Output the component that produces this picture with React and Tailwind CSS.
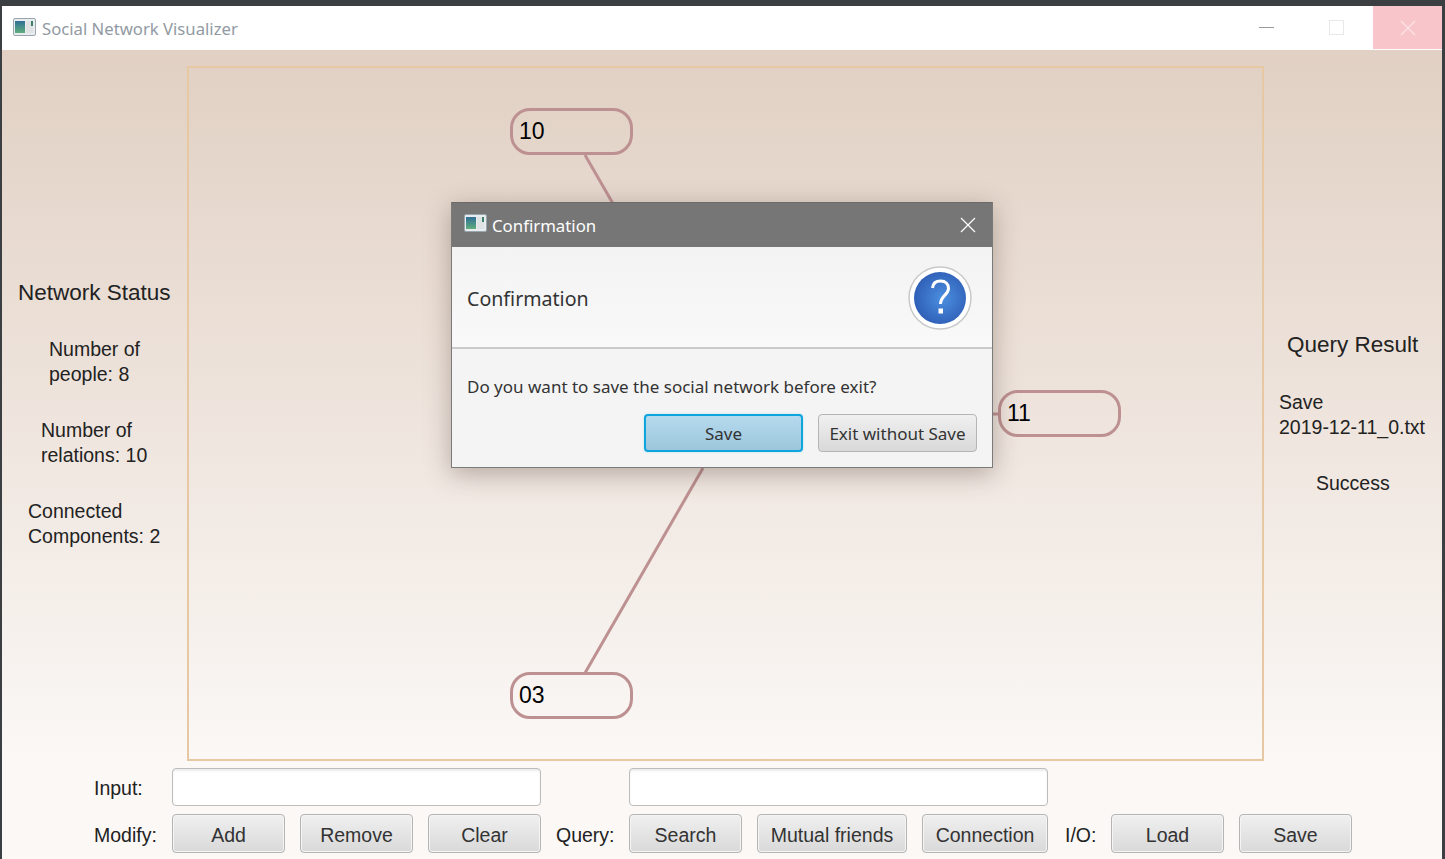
import React from "react";

const sans = "font-['Liberation_Sans',Arial,sans-serif]";
const ui = "font-['Noto_Sans','Open_Sans',sans-serif]";

const buttonClass =
  "h-[39px] pt-[4px] rounded-[4px] border border-[#b5b5b5] bg-gradient-to-b from-[#f0f0f0] to-[#d9d9d9] text-[19.5px] text-[#333] shadow-[inset_0_0_0_1px_#f4f4f4] flex items-center justify-center shrink-0";

function AppIcon({ className }) {
  return (
    <svg className={className} viewBox="0 0 23 18" width="23" height="18">
      <defs>
        <linearGradient id="appIconFill" x1="0" y1="0" x2="0" y2="1">
          <stop offset="0" stopColor="#2f6f96" />
          <stop offset="1" stopColor="#5fae7c" />
        </linearGradient>
      </defs>
      <rect x="0.5" y="0.5" width="22" height="17" rx="1.5" fill="#e8ecee" stroke="#9aa6ad" />
      <rect x="2" y="3" width="10" height="12" fill="url(#appIconFill)" />
      <rect x="13" y="3" width="7" height="12" fill="#dfe3e3" />
      <rect x="18" y="3" width="2" height="5" fill="#3f7f6c" />
    </svg>
  );
}

function Node({ label, className }) {
  return (
    <div
      className={`absolute w-[123px] h-[47px] rounded-[20px] border-[3px] border-[#bd9191] flex items-center pl-[6px] text-[23px] text-black ${className}`}
    >
      {label}
    </div>
  );
}

function Stat({ lines, className }) {
  return (
    <div className={`text-[19.5px] leading-[25px] text-[#222] ${className}`}>
      {lines.map((l) => (
        <div key={l}>{l}</div>
      ))}
    </div>
  );
}

function Graph() {
  return (
    <div className="relative w-[1077px] h-[695px] border-2 border-[#e8c8a2] shrink-0">
      {/* edges, coordinates relative to the canvas */}
      <svg className="absolute inset-0" width="1073" height="691">
        <line x1="396" y1="87" x2="514" y2="292" stroke="#bd9191" strokeWidth="3" />
        <line x1="396" y1="605" x2="514" y2="400" stroke="#bd9191" strokeWidth="3" />
        <line x1="779" y1="346" x2="811" y2="346" stroke="#bd9191" strokeWidth="3" />
      </svg>
      <Node label="10" className="left-[321px] top-[40px]" />
      <Node label="11" className="left-[809px] top-[322px]" />
      <Node label="03" className="left-[321px] top-[604px]" />
    </div>
  );
}

function Dialog() {
  return (
    <div className={`absolute left-[451px] top-[202px] w-[542px] h-[266px] border border-[#7a7a7a] border-t-[#6a6a6a] bg-[#f4f4f4] shadow-[0_6px_24px_rgba(70,50,40,0.35)] flex flex-col ${ui}`}>
      <div className="h-[44px] bg-[#767676] flex items-center pl-[12px] pr-[16px] text-white text-[16.8px] shrink-0">
        <AppIcon className="mr-[5px] -mt-[4px]" />
        <span className="pt-[2px]">Confirmation</span>
        <svg className="ml-auto" width="16" height="16" viewBox="0 0 16 16">
          <path d="M1 1 L15 15 M15 1 L1 15" stroke="#fff" strokeWidth="1.2" fill="none" />
        </svg>
      </div>
      <div className="h-[102px] pt-[2px] bg-gradient-to-b from-[#f3f3f3] to-[#f9f9f9] border-b-2 border-[#cbcbcb] flex items-center pl-[15px] pr-[20px] shrink-0">
        <span className="pt-[2px] text-[19.6px] text-[#333]">Confirmation</span>
        <svg className="ml-auto" width="64" height="64" viewBox="0 0 64 64">
          <defs>
            <radialGradient id="helpFill" cx="0.55" cy="0.5" r="0.55">
              <stop offset="0" stopColor="#4b8fe0" />
              <stop offset="1" stopColor="#2f5fb6" />
            </radialGradient>
          </defs>
          <circle cx="32" cy="32" r="31" fill="#fff" stroke="#c9c9c9" strokeWidth="1.5" />
          <circle cx="32" cy="32" r="26" fill="url(#helpFill)" />
          <path d="M24.5 22 C25 16.5 29 15 32.5 15 C37.5 15 40.5 18 40.5 22.5 C40.5 29 32.5 29.5 32.5 38" stroke="#fff" strokeWidth="3" fill="none" />
          <rect x="30.5" y="42.5" width="4.5" height="5" fill="#fff" />
        </svg>
      </div>
      <div className="pl-[15px] pt-[26px] text-[17px] leading-[24px] text-[#333]">
        Do you want to save the social network before exit?
      </div>
      <div className="flex justify-end gap-[15px] pr-[15px] mt-[15px]">
        <div className="w-[159px] h-[38px] pt-[2px] rounded-[4px] border-2 border-[#0ea5dc] bg-gradient-to-b from-[#b6daee] to-[#9cc6dc] text-[17px] text-[#333] flex items-center justify-center shadow-[0_0_2px_#a9dcf2]">
          Save
        </div>
        <div className="w-[159px] h-[38px] pt-[2px] rounded-[4px] border border-[#b5b5b5] bg-gradient-to-b from-[#f0f0f0] to-[#d9d9d9] text-[17px] text-[#333] flex items-center justify-center">
          Exit without Save
        </div>
      </div>
    </div>
  );
}

export default function App() {
  return (
    <div className={`relative h-[859px] w-[1445px] overflow-hidden bg-[#3c3f42] pt-[6px] pl-[2px] pr-[3px] ${sans}`}>
      <div className="flex flex-col h-full">
        {/* title bar */}
        <div className="h-[44px] bg-white flex items-center pl-[11px] shrink-0">
          <AppIcon className="mr-[6px] -mt-[3px]" />
          <span className={`pt-[2px] text-[16.7px] text-[#929aa3] ${ui}`}>Social Network Visualizer</span>
          <div className="ml-auto flex items-start h-full">
            <svg className="mr-[55px] mt-[21px]" width="15" height="2" viewBox="0 0 15 2">
              <rect width="15" height="1" fill="#999" />
            </svg>
            <div className="w-[15px] h-[15px] mt-[14px] mr-[29px] border border-[#e8e8e8]" />
            <div className="w-[69px] h-[43px] bg-[#f8c6ca] flex items-center justify-center">
              <svg width="16" height="16" viewBox="0 0 16 16">
                <path d="M1 1 L15 15 M15 1 L1 15" stroke="#fbe3e5" strokeWidth="1.2" fill="none" />
              </svg>
            </div>
          </div>
        </div>

        {/* main area */}
        <div className="flex-1 bg-gradient-to-b from-[#e1d0c3] to-[#fbf8f6] to-[88%] flex flex-col">
          <div className="flex pt-[16px]">
            <aside className="w-[185px] shrink-0 pt-[213px]">
              <div className="ml-[16px] text-[22.5px] leading-[27px] text-[#222]">Network Status</div>
              <Stat lines={["Number of", "people: 8"]} className="ml-[47px] mt-[31px]" />
              <Stat lines={["Number of", "relations: 10"]} className="ml-[39px] mt-[31px]" />
              <Stat lines={["Connected", "Components: 2"]} className="ml-[26px] mt-[31px]" />
            </aside>
            <Graph />
            <aside className="flex-1 pt-[265px] text-[#222]">
              <div className="ml-[23px] text-[22.5px] leading-[27px]">Query Result</div>
              <Stat lines={["Save", "2019-12-11_0.txt"]} className="ml-[15px] mt-[32px]" />
              <Stat lines={["Success"]} className="ml-[52px] mt-[31px]" />
            </aside>
          </div>

          {/* controls */}
          <div className="pl-[92px] pt-[7px] text-[19.5px] text-[#222]">
            <div className="flex items-center h-[38px]">
              <span className="w-[78px] pt-[4px]">Input:</span>
              <div className="w-[369px] h-[38px] rounded-[4px] border border-[#bdbdbd] bg-white shadow-[inset_0_2px_2px_#ececec]" />
              <div className="w-[88px]" />
              <div className="w-[419px] h-[38px] rounded-[4px] border border-[#bdbdbd] bg-white shadow-[inset_0_2px_2px_#ececec]" />
            </div>
            <div className="flex items-center mt-[8px]">
              <span className="w-[78px] pt-[4px]">Modify:</span>
              <div className="flex gap-[15px]">
                <div className={`${buttonClass} w-[113px]`}>Add</div>
                <div className={`${buttonClass} w-[113px]`}>Remove</div>
                <div className={`${buttonClass} w-[113px]`}>Clear</div>
              </div>
              <span className="w-[88px] pl-[15px] pt-[4px] shrink-0">Query:</span>
              <div className="flex gap-[15px]">
                <div className={`${buttonClass} w-[113px]`}>Search</div>
                <div className={`${buttonClass} w-[150px]`}>Mutual friends</div>
                <div className={`${buttonClass} w-[126px]`}>Connection</div>
              </div>
              <span className="w-[63px] pl-[17px] pt-[4px] shrink-0">I/O:</span>
              <div className="flex gap-[15px]">
                <div className={`${buttonClass} w-[113px]`}>Load</div>
                <div className={`${buttonClass} w-[113px]`}>Save</div>
              </div>
            </div>
          </div>
        </div>
      </div>
      <Dialog />
    </div>
  );
}
